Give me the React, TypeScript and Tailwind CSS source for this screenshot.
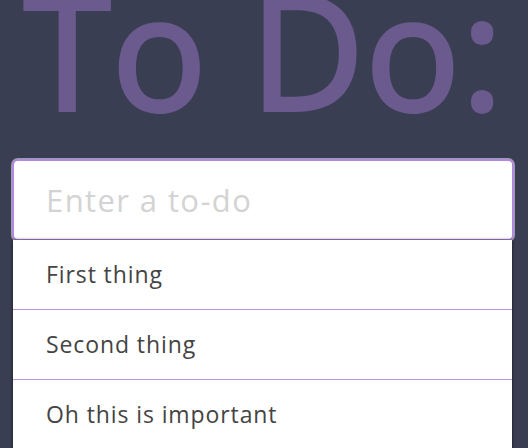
import React from 'react';

const items = ['First thing', 'Second thing', 'Oh this is important'];

export default function App() {
  return (
    <div className="min-h-screen h-[448px] overflow-hidden bg-[#393e52] font-['Open_Sans',sans-serif]">
      <div className="px-3">
        {/* Heading */}
        <h1 className="-mt-[41px] pl-[12px] text-[157px] leading-[180px] font-normal tracking-[1.5px] text-[#6b5a8e] [-webkit-text-stroke:4px_#6b5a8e] whitespace-nowrap">
          To Do:
        </h1>

        {/* Input */}
        <input
          type="text"
          placeholder="Enter a to-do"
          className="mt-[20px] block w-[502px] h-[82px] rounded-md border-2 border-[#b388e0] bg-white px-8 text-[31px] tracking-[1.4px] text-[#444] placeholder:text-[#d3d3d3] outline-none shadow-[0_0_0_1px_rgba(255,255,255,0.5)]"
        />

        {/* List */}
        <ul className="-mt-px mx-px w-[499px] bg-white shadow-[0_0_3px_rgba(0,0,0,0.7)]">
          {items.map((item) => (
            <li
              key={item}
              className="h-[70px] flex items-center pl-[33px] border-b border-[#b795e0] text-[23px] tracking-[0.9px] text-[#444]"
            >
              {item}
            </li>
          ))}
        </ul>
      </div>
    </div>
  );
}
